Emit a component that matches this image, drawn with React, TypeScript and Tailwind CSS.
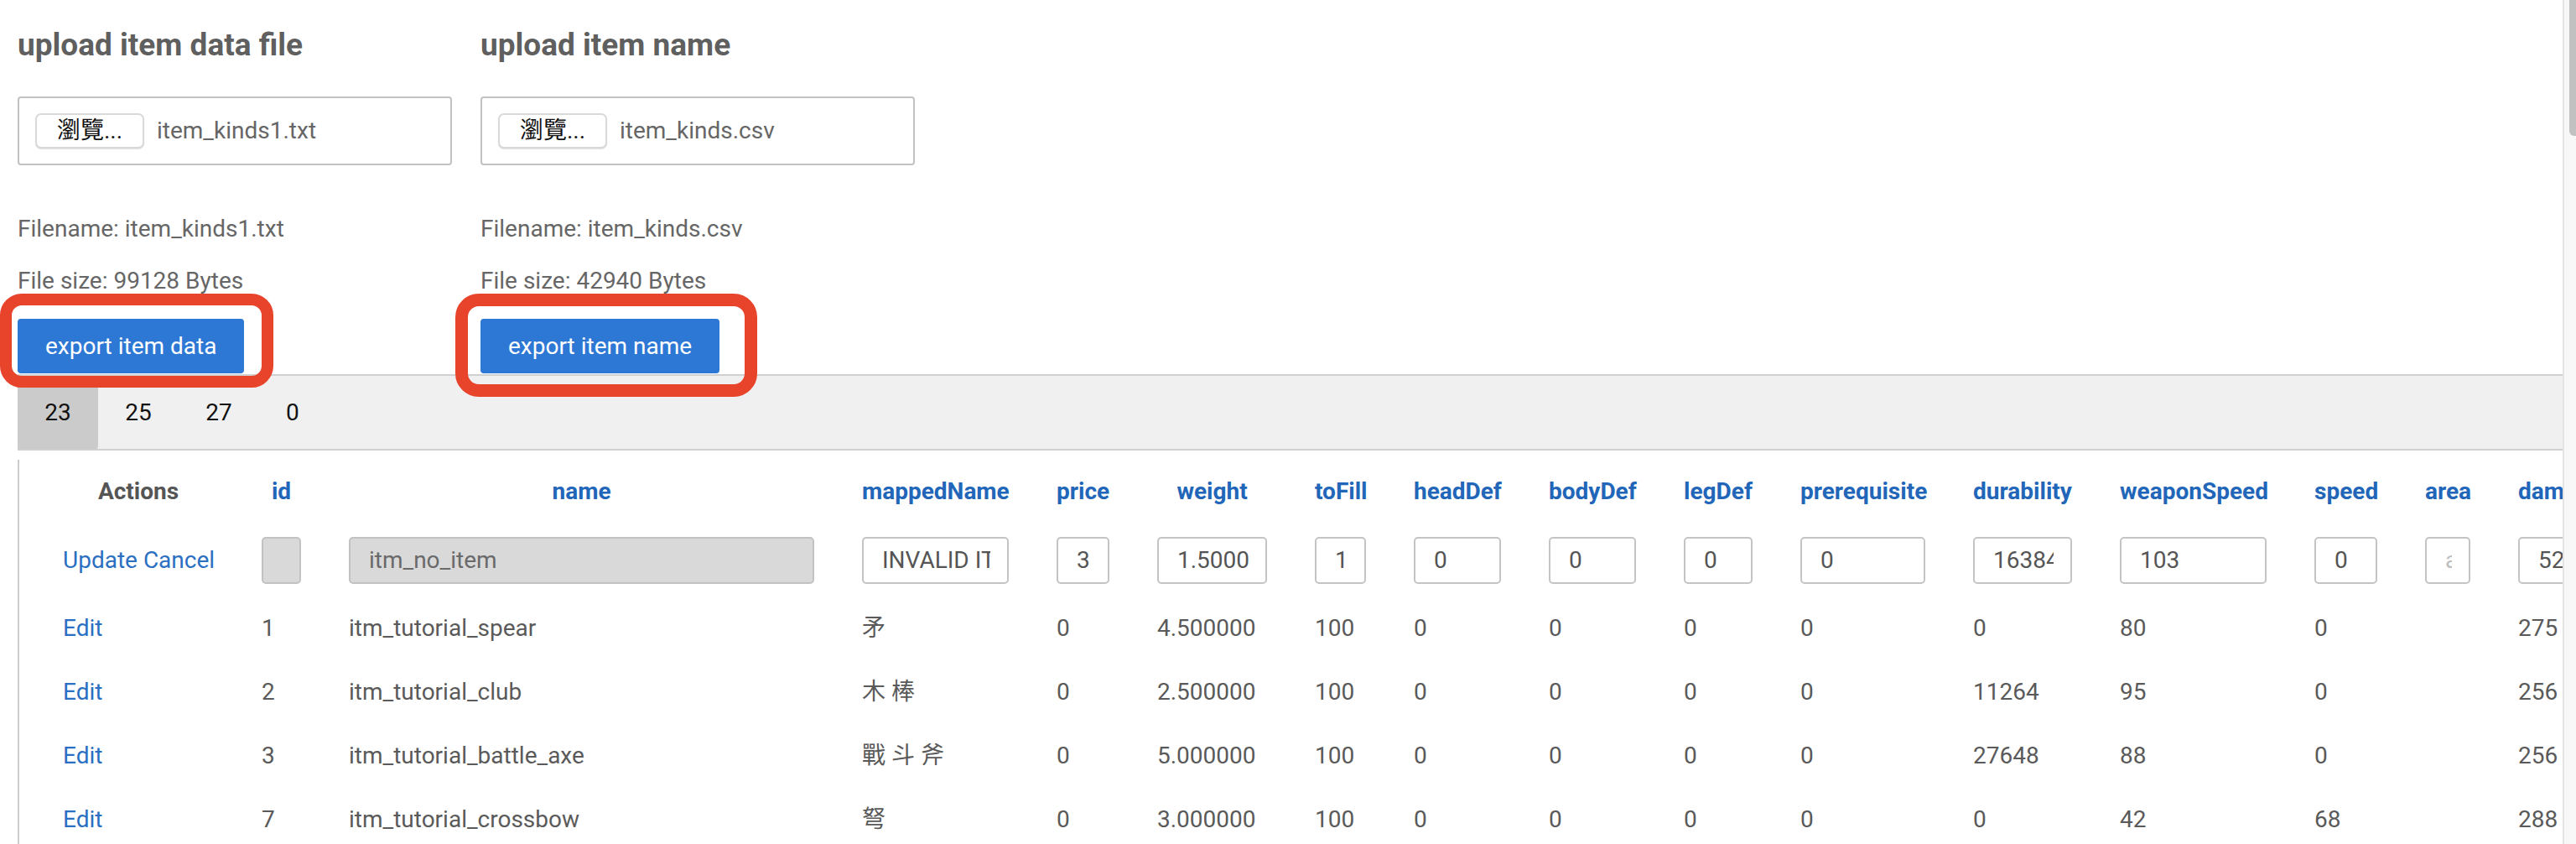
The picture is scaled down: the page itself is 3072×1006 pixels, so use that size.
import React from 'react';

type Col = { key: string; label: string; w: number };

const cols: Col[] = [
  { key: 'id', label: 'id', w: 47 },
  { key: 'name', label: 'name', w: 555 },
  { key: 'mappedName', label: 'mappedName', w: 175 },
  { key: 'price', label: 'price', w: 63 },
  { key: 'weight', label: 'weight', w: 131 },
  { key: 'toFill', label: 'toFill', w: 61 },
  { key: 'headDef', label: 'headDef', w: 104 },
  { key: 'bodyDef', label: 'bodyDef', w: 104 },
  { key: 'legDef', label: 'legDef', w: 82 },
  { key: 'prerequisite', label: 'prerequisite', w: 149 },
  { key: 'durability', label: 'durability', w: 118 },
  { key: 'weaponSpeed', label: 'weaponSpeed', w: 175 },
  { key: 'speed', label: 'speed', w: 75 },
  { key: 'area', label: 'area', w: 54 },
  { key: 'damage', label: 'damage', w: 100 },
];

const editing: Record<string, string> = {
  id: '',
  name: 'itm_no_item',
  mappedName: 'INVALID ITEM',
  price: '3',
  weight: '1.5000',
  toFill: '1',
  headDef: '0',
  bodyDef: '0',
  legDef: '0',
  prerequisite: '0',
  durability: '16384',
  weaponSpeed: '103',
  speed: '0',
  area: '',
  damage: '520',
};

const rows: Record<string, string>[] = [
  { id: '1', name: 'itm_tutorial_spear', mappedName: '矛', price: '0', weight: '4.500000', toFill: '100', headDef: '0', bodyDef: '0', legDef: '0', prerequisite: '0', durability: '0', weaponSpeed: '80', speed: '0', area: '', damage: '275' },
  { id: '2', name: 'itm_tutorial_club', mappedName: '木 棒', price: '0', weight: '2.500000', toFill: '100', headDef: '0', bodyDef: '0', legDef: '0', prerequisite: '0', durability: '11264', weaponSpeed: '95', speed: '0', area: '', damage: '256' },
  { id: '3', name: 'itm_tutorial_battle_axe', mappedName: '戰 斗 斧', price: '0', weight: '5.000000', toFill: '100', headDef: '0', bodyDef: '0', legDef: '0', prerequisite: '0', durability: '27648', weaponSpeed: '88', speed: '0', area: '', damage: '256' },
  { id: '7', name: 'itm_tutorial_crossbow', mappedName: '弩', price: '0', weight: '3.000000', toFill: '100', headDef: '0', bodyDef: '0', legDef: '0', prerequisite: '0', durability: '0', weaponSpeed: '42', speed: '68', area: '', damage: '288' },
];

const tabs = ['23', '25', '27', '0'];

function UploadBlock({ title, file, size, action }: { title: string; file: string; size: number; action: string }) {
  return (
    <div className="w-[518px] flex flex-col">
      <h3 className="text-[37px] leading-[43px] font-bold text-[#5f5f5f] whitespace-nowrap">{title}</h3>
      <div className="mt-[40px] h-[82px] border-2 border-[#c2c2c2] rounded-[4px] flex items-center pl-[19px]">
        <button className="h-[42px] w-[130px] border-2 border-[#d9d9d9] rounded-[7px] bg-white shadow-[0_1px_1px_rgba(0,0,0,0.12)] text-[28px] leading-none text-[#111]">
          瀏覽...
        </button>
        <span className="ml-[15px] text-[28px] text-[#666]">{file}</span>
      </div>
      <p className="mt-[56px] text-[28px] leading-[40px] text-[#666] whitespace-nowrap">Filename: {file}</p>
      <p className="mt-[22px] text-[28px] leading-[40px] text-[#666] whitespace-nowrap">File size: {size} Bytes</p>
      <div className="mt-[25px]">
        <button className="h-[65px] px-[33px] rounded-[4px] bg-[#2d77d5] text-white text-[28px] whitespace-nowrap">{action}</button>
      </div>
    </div>
  );
}

const cell = 'pl-[28px] pr-[29px] whitespace-nowrap';

export default function App() {
  return (
    <div className="flex w-[3072px] h-[1006px] overflow-hidden bg-white font-['Roboto','Noto_Sans_CJK_TC',sans-serif]">
      <main className="relative flex-1 min-w-0 overflow-hidden pt-[32px]">
        <div className="flex gap-[34px] pl-[21px]">
          <UploadBlock title="upload item data file" file="item_kinds1.txt" size={99128} action="export item data" />
          <UploadBlock title="upload item name" file="item_kinds.csv" size={42940} action="export item name" />
        </div>

        <div className="ml-[21px] mt-[1px] w-max min-w-[3035px]">
          <div className="flex h-[91px] bg-[#f0f0f0] border-y-2 border-[#d0d0d0]">
            {tabs.map((t, i) => (
              <div
                key={t}
                className={`flex items-center justify-center text-[28px] text-[#111] ${
                  i === 0 ? 'w-[96px] bg-[#cbcbcb] rounded-br-[3px]' : i === 3 ? 'px-[32px]' : 'w-[96px]'
                }`}
              >
                {t}
              </div>
            ))}
          </div>

          <div className="border-l-2 border-[#cccccc] pb-[40px]">
            <table className="ml-[24px] mt-[11px] border-collapse">
              <thead>
                <tr className="h-[76px]">
                  <th className={cell}>
                    <div className="w-[180px] text-center text-[28px] font-bold text-[#555]">Actions</div>
                  </th>
                  {cols.map((c) => (
                    <th key={c.key} className={cell}>
                      <div className="text-center text-[28px] font-bold text-[#2166b8]" style={{ width: c.w }}>
                        {c.label}
                      </div>
                    </th>
                  ))}
                </tr>
              </thead>
              <tbody>
                <tr className="h-[87px]">
                  <td className={cell}>
                    <div className="w-[180px] text-[28px] text-[#2b6fc2]">
                      <a>Update</a> <a>Cancel</a>
                    </div>
                  </td>
                  {cols.map((c) => {
                    const disabled = c.key === 'id' || c.key === 'name';
                    return (
                      <td key={c.key} className={cell}>
                        <input
                          readOnly
                          disabled={disabled}
                          value={editing[c.key]}
                          placeholder={c.key === 'area' ? 'area' : undefined}
                          style={{ width: c.w }}
                          className={`block h-[56px] border-2 rounded-[5px] pl-[22px] pr-[20px] text-[28px] outline-none placeholder:text-[#bdbdbd] ${
                            disabled ? 'bg-[#d9d9d9] border-[#c2c2c2] text-[#6a6a6a]' : 'bg-white border-[#c4c4c4] text-[#555]'
                          }`}
                        />
                      </td>
                    );
                  })}
                </tr>
                {rows.map((r) => (
                  <tr key={r.id} className="h-[76px]">
                    <td className={cell}>
                      <a className="text-[28px] text-[#2b6fc2]">Edit</a>
                    </td>
                    {cols.map((c) => (
                      <td key={c.key} className={`${cell} text-[28px] text-[#5a5a5a]`}>
                        {r[c.key]}
                      </td>
                    ))}
                  </tr>
                ))}
              </tbody>
            </table>
          </div>
        </div>

        {/* annotation marks */}
        <div className="absolute left-0 top-[350px] w-[326px] h-[112px] border-[14px] border-[#e8432b] rounded-[26px] pointer-events-none" />
        <div className="absolute left-[543px] top-[350px] w-[360px] h-[123px] border-[15px] border-[#e8432b] rounded-[28px] pointer-events-none" />
      </main>

      <div className="w-[16px] h-full bg-[#f8f8f8] border-l-2 border-[#e4e4e4] flex justify-end">
        <div className="w-[8px] h-[162px] bg-[#c1c1c1] rounded-bl-[6px]" />
      </div>
    </div>
  );
}
